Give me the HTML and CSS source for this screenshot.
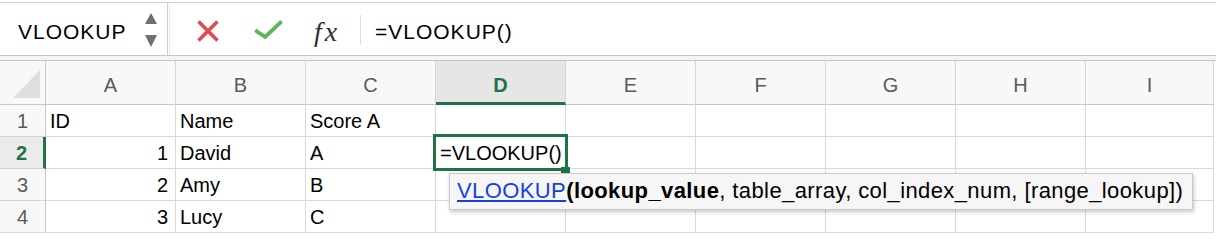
FILE: index.html
```html
<!DOCTYPE html>
<html>
<head>
<meta charset="utf-8">
<link rel="stylesheet" href="styles.css">
</head>
<body>
<div class="app">
  <div class="toolbar">
    <div class="namebox">
      <span class="name">VLOOKUP</span>
      <svg class="spin" width="12" height="34" viewBox="0 0 12 34"><polygon points="6,0 12,11 0,11" fill="#6f6f6f"/><polygon points="0,22 12,22 6,34" fill="#6f6f6f"/></svg>
    </div>
    <div class="fbar">
      <svg class="cancel" width="22" height="22" viewBox="0 0 22 22"><path d="M1.5 1.5L20.5 20.5M20.5 1.5L1.5 20.5" stroke="#e0494e" stroke-width="3.6" fill="none"/></svg>
      <svg class="ok" width="29" height="19" viewBox="0 0 29 19"><path d="M1.2 10.2L11.2 17L27.6 1.4" stroke="#5db55a" stroke-width="3.8" fill="none"/></svg>
      <span class="fx">fx</span>
      <span class="sep"></span>
      <span class="formula">=VLOOKUP()</span>
    </div>
  </div>
  <div class="band"></div>
  <div class="grid">
    <div class="ch corner"><svg width="28" height="29" viewBox="0 0 28 29"><polygon points="27,0 27,28 0,28" fill="#dedede"/></svg></div>
    <div class="ch">A</div><div class="ch">B</div><div class="ch">C</div><div class="ch active">D</div><div class="ch">E</div><div class="ch">F</div><div class="ch">G</div><div class="ch">H</div><div class="ch">I</div>

    <div class="rh">1</div>
    <div class="c">ID</div><div class="c">Name</div><div class="c">Score A</div><div class="c"></div><div class="c"></div><div class="c"></div><div class="c"></div><div class="c"></div><div class="c"></div>

    <div class="rh active">2</div>
    <div class="c num">1</div><div class="c">David</div><div class="c">A</div><div class="c">=VLOOKUP()</div><div class="c"></div><div class="c"></div><div class="c"></div><div class="c"></div><div class="c"></div>

    <div class="rh">3</div>
    <div class="c num">2</div><div class="c">Amy</div><div class="c">B</div><div class="c"></div><div class="c"></div><div class="c"></div><div class="c"></div><div class="c"></div><div class="c"></div>

    <div class="rh">4</div>
    <div class="c num">3</div><div class="c">Lucy</div><div class="c">C</div><div class="c"></div><div class="c"></div><div class="c"></div><div class="c"></div><div class="c"></div><div class="c"></div>

    <div class="sel"></div>
    <div class="handle"></div>
    <div class="tip"><span class="fn">VLOOKUP</span><b>(lookup_value</b>, table_array, col_index_num, [range_lookup])</div>
  </div>
</div>
</body>
</html>
```

FILE: styles.css
```css
html, body {
  margin: 0;
  padding: 0;
  background: #ffffff;
}
.app {
  width: 1216px;
  height: 234px;
  overflow: hidden;
  font-family: "Liberation Sans", Arial, sans-serif;
  color: #000;
}
.toolbar {
  margin-top: 2px;
  height: 54px;
  box-sizing: border-box;
  border-top: 1px solid #d2d2d2;
  border-bottom: 1px solid #c6c6c6;
  display: flex;
  align-items: flex-start;
}
.namebox {
  width: 168px;
  height: 52px;
  box-sizing: border-box;
  border-right: 1px solid #cfcfcf;
  display: flex;
  align-items: flex-start;
  padding-left: 18px;
}
.name {
  margin-top: 18px;
  font-size: 21px;
  line-height: 22px;
  letter-spacing: 1px;
}
.spin {
  margin-left: auto;
  margin-right: 10px;
  margin-top: 10px;
}
.fbar {
  flex: 1;
  height: 52px;
  display: flex;
  align-items: flex-start;
  border-left: 1px solid #ececec;
  margin-left: 1px;
  padding-left: 27px;
}
.cancel {
  margin-top: 17px;
}
.ok {
  margin-top: 17px;
  margin-left: 35px;
}
.fx {
  width: 32px;
  margin-left: 31px;
  margin-top: 15px;
  font-family: "Liberation Serif", "Times New Roman", serif;
  font-style: italic;
  font-size: 28px;
  line-height: 28px;
  letter-spacing: 3px;
  color: #2f2f2f;
}
.sep {
  width: 1px;
  height: 30px;
  margin-top: 12px;
  margin-left: 14px;
  background: #dddddd;
}
.formula {
  margin-left: 14px;
  margin-top: 18px;
  font-size: 21px;
  line-height: 22px;
  letter-spacing: 1px;
}
.band {
  height: 5px;
  box-sizing: border-box;
  background: #f4f4f4;
  border-bottom: 1px solid #c6c6c6;
}
.grid {
  position: relative;
  display: grid;
  grid-template-columns: 46px repeat(8, 130px) 128px;
  font-size: 20px;
}
.ch {
  height: 44px;
  box-sizing: border-box;
  background: #f8f8f8;
  border-right: 1px solid #d6d6d6;
  border-bottom: 1px solid #c8c8c8;
  text-align: center;
  color: #5a5a5a;
  padding-top: 5px;
  line-height: 39px;
}
.ch.active {
  background: #e6e6e6;
  color: #217346;
  font-weight: bold;
  border-bottom: 3px solid #217346;
}
.corner {
  position: relative;
  border-right-color: #c8c8c8;
  padding: 9px 0 0 13px;
  text-align: left;
  line-height: 0;
}
.rh {
  height: 32px;
  box-sizing: border-box;
  background: #f8f8f8;
  border-right: 1px solid #c8c8c8;
  border-bottom: 1px solid #d6d6d6;
  text-align: center;
  color: #5a5a5a;
  padding-top: 2px;
  line-height: 29px;
}
.rh.active {
  background: #ebebeb;
  color: #217346;
  font-weight: bold;
  border-right: 3px solid #217346;
}
.c {
  height: 32px;
  box-sizing: border-box;
  border-right: 1px solid #d9d9d9;
  border-bottom: 1px solid #d9d9d9;
  padding: 2px 4px 0 4px;
  line-height: 29px;
  white-space: nowrap;
}
.c.num {
  text-align: right;
  padding-right: 7px;
}
.sel {
  position: absolute;
  left: 433px;
  top: 73px;
  width: 135px;
  height: 37px;
  box-sizing: border-box;
  border: 3px solid #217346;
}
.handle {
  position: absolute;
  left: 561px;
  top: 106px;
  width: 9px;
  height: 9px;
  background: #217346;
}
.tip {
  position: absolute;
  left: 449px;
  top: 112px;
  width: 744px;
  height: 37px;
  box-sizing: border-box;
  background: #f6f6f6;
  border: 1px solid #c9c9c9;
  box-shadow: 1px 2px 4px rgba(0, 0, 0, 0.22);
  padding: 5px 0 0 7px;
  font-size: 22px;
  line-height: 24px;
  letter-spacing: 0.4px;
  white-space: nowrap;
  z-index: 2;
}
.fn {
  color: #1441e0;
  text-decoration: underline;
}
.tip b {
  font-weight: bold;
}
```
